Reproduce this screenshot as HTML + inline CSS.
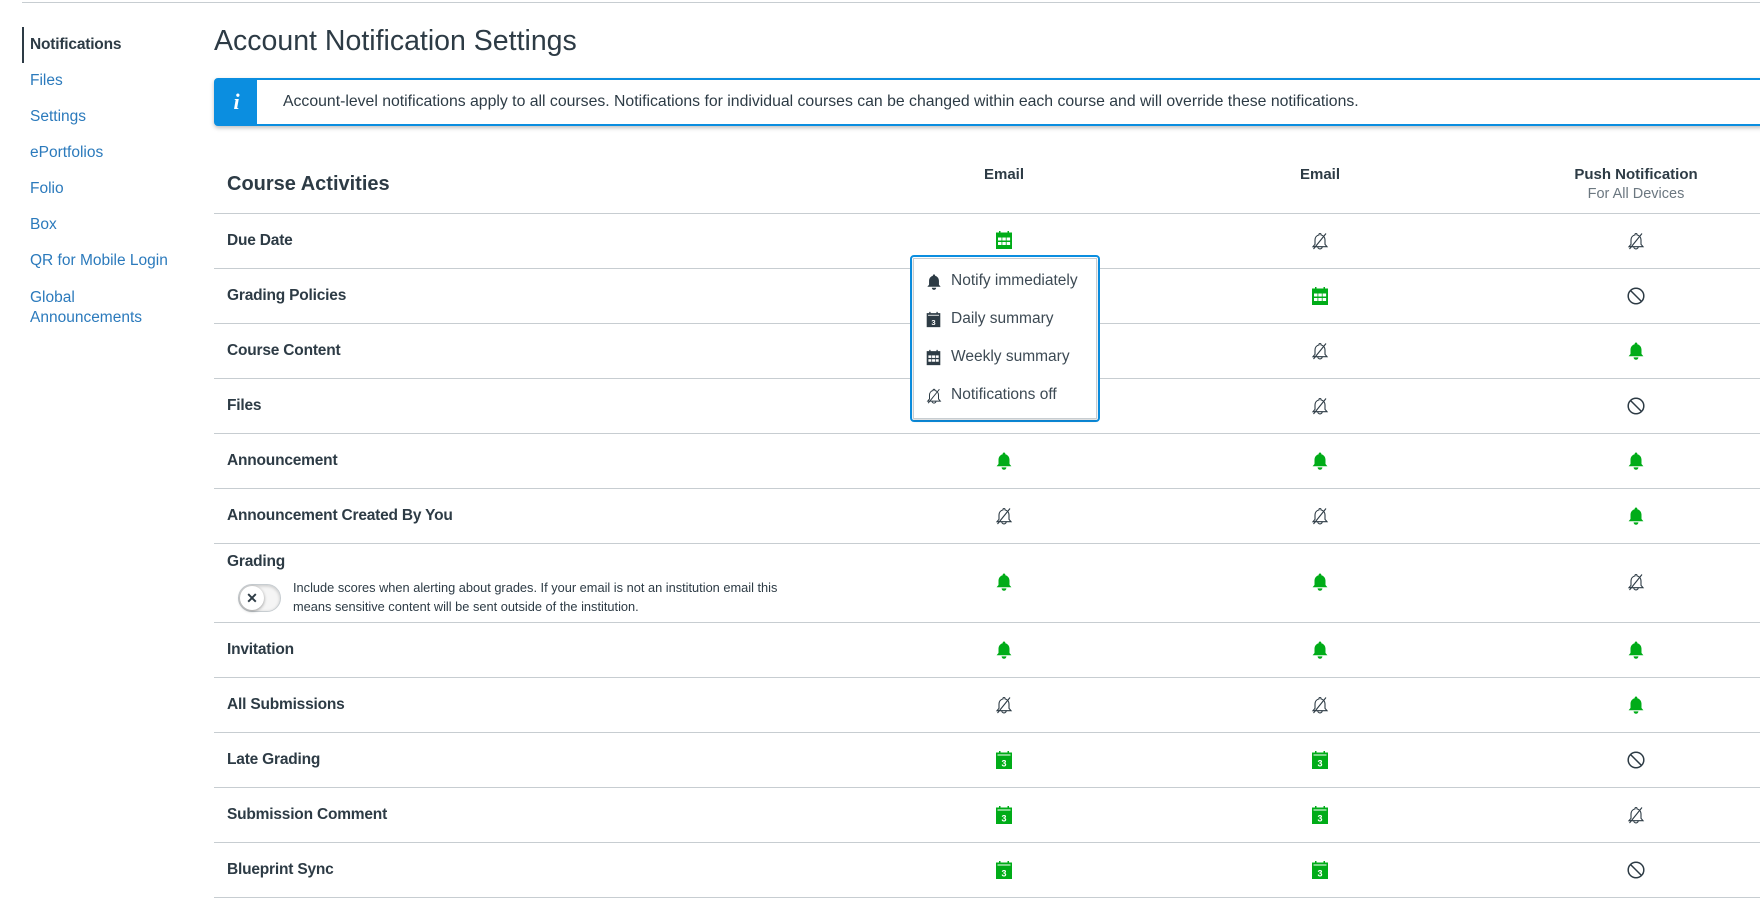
<!DOCTYPE html>
<html><head><meta charset="utf-8">
<style>
*{margin:0;padding:0;box-sizing:border-box}
body{width:1760px;height:899px;overflow:hidden;background:#fff;font-family:"Liberation Sans",sans-serif;color:#2d3b45;position:relative}
.a{position:absolute;white-space:nowrap}
.nav{left:30px;font-size:15.5px;color:#2b7abc}
.hl{position:absolute;left:214px;right:0;height:1px;background:#c7cdd1}
.lbl{left:227px;font-size:15.5px;font-weight:bold;letter-spacing:-0.2px}
</style></head><body>
<svg width="0" height="0" style="position:absolute">
<defs>
<symbol id="bell" viewBox="0 0 20 20"><path d="M10 1.5c.8 0 1.3.6 1.3 1.3v.4c2.6.6 4.2 2.9 4.2 5.6v4.2l1.9 2.3H2.6l1.9-2.3V8.8c0-2.7 1.6-5 4.2-5.6v-.4c0-.7.5-1.3 1.3-1.3zM7.6 16.4h4.8a2.4 2.4 0 0 1-4.8 0z" fill="currentColor"/></symbol>
<symbol id="off" viewBox="0 0 20 20"><g fill="none" stroke="#2d3b45" stroke-width="1.1"><path d="M10 2.5c.6 0 1 .4 1 1v.4c2.4.6 4 2.6 4 5v4.4l2 2.4H3l2-2.4V8.9c0-2.4 1.6-4.4 4-5v-.4c0-.6.4-1 1-1z"/><path d="M7.8 15.7a2.2 2.2 0 0 0 4.4 0"/><path d="M16 2.5 3.5 18"/></g></symbol>
<symbol id="no" viewBox="0 0 20 20"><g fill="none" stroke="#2d3b45" stroke-width="1.5"><circle cx="10" cy="10" r="7.8"/><path d="M4.5 4.5l11 11"/></g></symbol>
<symbol id="wk" viewBox="0 0 20 20"><path d="M5 1h1.5v2.5H5zM13.5 1H15v2.5h-1.5z" fill="currentColor"/><rect x="2" y="2.5" width="16" height="16.5" fill="currentColor"/><g fill="#fff"><rect x="4" y="7.5" width="3.5" height="3"/><rect x="8.3" y="7.5" width="3.5" height="3"/><rect x="12.6" y="7.5" width="3.5" height="3"/><rect x="4" y="12" width="3.5" height="3"/><rect x="8.3" y="12" width="3.5" height="3"/><rect x="12.6" y="12" width="3.5" height="3"/></g></symbol>
<symbol id="dy" viewBox="0 0 20 20"><path d="M5 1h1.5v2.5H5zM13.5 1H15v2.5h-1.5z" fill="currentColor"/><rect x="2" y="2.5" width="16" height="16.5" fill="currentColor"/><rect x="3.5" y="4.5" width="13" height="1" fill="#fff"/><text x="10" y="16.5" text-anchor="middle" font-family="Liberation Sans" font-weight="bold" font-size="9" fill="#fff">3</text></symbol>
</defs></svg>

<div class="a" style="left:22px;right:0;top:2px;height:1px;background:#c7cdd1"></div>
<div class="a" style="left:22px;top:27px;width:2px;height:36px;background:#2d3b45"></div>
<div class="a nav" style="top:36px;color:#2d3b45;font-weight:bold;letter-spacing:-0.2px">Notifications</div>
<div class="a nav" style="top:72px">Files</div>
<div class="a nav" style="top:108px">Settings</div>
<div class="a nav" style="top:144px">ePortfolios</div>
<div class="a nav" style="top:180px">Folio</div>
<div class="a nav" style="top:216px">Box</div>
<div class="a nav" style="top:252px">QR for Mobile Login</div>
<div class="a nav" style="top:288px;white-space:normal;width:130px;line-height:20px">Global Announcements</div>

<div class="a" style="left:214px;top:25px;font-size:28.5px;font-weight:normal">Account Notification Settings</div>

<div class="a" style="left:214px;top:78px;right:-4px;height:48px;border:2px solid #0b8ee0;border-radius:4px;box-shadow:0 2px 4px rgba(0,0,0,.25);background:#fff">
 <div style="position:absolute;left:0;top:0;bottom:0;width:41px;background:#0b8ee0;color:#fff;font-family:'Liberation Serif',serif;font-style:italic;font-weight:bold;font-size:22px;text-align:center;line-height:44px">i</div>
 <div style="position:absolute;left:67px;top:13px;font-size:15.8px">Account-level notifications apply to all courses. Notifications for individual courses can be changed within each course and will override these notifications.</div>
</div>

<div class="a" style="left:227px;top:173px;font-size:20px;font-weight:bold">Course Activities</div>
<div class="a" style="left:954px;width:100px;text-align:center;top:166px;font-size:15px;font-weight:bold">Email</div>
<div class="a" style="left:1270px;width:100px;text-align:center;top:166px;font-size:15px;font-weight:bold">Email</div>
<div class="a" style="left:1536px;width:200px;text-align:center;top:166px;font-size:15px;font-weight:bold">Push Notification</div>
<div class="a" style="left:1536px;width:200px;text-align:center;top:186px;font-size:14.5px;color:#6b7780">For All Devices</div>

<div class="hl" style="top:213px"></div><div class="hl" style="top:268px"></div><div class="hl" style="top:323px"></div><div class="hl" style="top:378px"></div><div class="hl" style="top:433px"></div><div class="hl" style="top:488px"></div><div class="hl" style="top:543px"></div><div class="hl" style="top:622px"></div><div class="hl" style="top:677px"></div><div class="hl" style="top:732px"></div><div class="hl" style="top:787px"></div><div class="hl" style="top:842px"></div><div class="hl" style="top:897px"></div>

<div class="a lbl" style="top:232px">Due Date</div>
<div class="a lbl" style="top:287px">Grading Policies</div>
<div class="a lbl" style="top:342px">Course Content</div>
<div class="a lbl" style="top:397px">Files</div>
<div class="a lbl" style="top:452px">Announcement</div>
<div class="a lbl" style="top:507px">Announcement Created By You</div>
<div class="a lbl" style="top:553px">Grading</div>
<div class="a lbl" style="top:641px">Invitation</div>
<div class="a lbl" style="top:696px">All Submissions</div>
<div class="a lbl" style="top:751px">Late Grading</div>
<div class="a lbl" style="top:806px">Submission Comment</div>
<div class="a lbl" style="top:861px">Blueprint Sync</div>

<div class="a" style="left:238px;top:584px;width:43px;height:28px;border-radius:14px;background:#f5f5f5;border:1px solid #c7cdd1;box-shadow:inset 0 1px 3px rgba(0,0,0,.2)">
 <div style="position:absolute;left:1px;top:1px;width:24px;height:24px;border-radius:50%;background:#fff;box-shadow:0 1px 3px rgba(0,0,0,.4);text-align:center;line-height:24px;font-size:14px;font-weight:bold">✕</div>
</div>
<div class="a" style="left:293px;top:578px;font-size:12.8px;line-height:19px;white-space:normal;width:505px">Include scores when alerting about grades. If your email is not an institution email this means sensitive content will be sent outside of the institution.</div>

<svg class="a" style="left:0;top:0" width="1760" height="899">
<g style="color:#00ac18">
<use href="#wk" x="994" y="230" width="20" height="20"/>
<use href="#bell" x="994" y="451" width="20" height="20"/>
<use href="#off" x="994" y="506" width="20" height="20"/>
<use href="#bell" x="994" y="572" width="20" height="20"/>
<use href="#bell" x="994" y="640" width="20" height="20"/>
<use href="#off" x="994" y="695" width="20" height="20"/>
<use href="#dy" x="994" y="750" width="20" height="20"/>
<use href="#dy" x="994" y="805" width="20" height="20"/>
<use href="#dy" x="994" y="860" width="20" height="20"/>
<use href="#off" x="1310" y="231" width="20" height="20"/>
<use href="#wk" x="1310" y="286" width="20" height="20"/>
<use href="#off" x="1310" y="341" width="20" height="20"/>
<use href="#off" x="1310" y="396" width="20" height="20"/>
<use href="#bell" x="1310" y="451" width="20" height="20"/>
<use href="#off" x="1310" y="506" width="20" height="20"/>
<use href="#bell" x="1310" y="572" width="20" height="20"/>
<use href="#bell" x="1310" y="640" width="20" height="20"/>
<use href="#off" x="1310" y="695" width="20" height="20"/>
<use href="#dy" x="1310" y="750" width="20" height="20"/>
<use href="#dy" x="1310" y="805" width="20" height="20"/>
<use href="#dy" x="1310" y="860" width="20" height="20"/>
<use href="#off" x="1626" y="231" width="20" height="20"/>
<use href="#no" x="1626" y="286" width="20" height="20"/>
<use href="#bell" x="1626" y="341" width="20" height="20"/>
<use href="#no" x="1626" y="396" width="20" height="20"/>
<use href="#bell" x="1626" y="451" width="20" height="20"/>
<use href="#bell" x="1626" y="506" width="20" height="20"/>
<use href="#off" x="1626" y="572" width="20" height="20"/>
<use href="#bell" x="1626" y="640" width="20" height="20"/>
<use href="#bell" x="1626" y="695" width="20" height="20"/>
<use href="#no" x="1626" y="750" width="20" height="20"/>
<use href="#off" x="1626" y="805" width="20" height="20"/>
<use href="#no" x="1626" y="860" width="20" height="20"/>
</g>
</svg>

<div class="a" style="left:910px;top:255px;width:190px;height:167px;border:2px solid #0b8ee0;border-radius:4px;background:#fff">
 <div style="position:absolute;left:1px;top:1px;right:1px;bottom:1px;border:1px solid #c7cdd1;box-shadow:0 2px 3px rgba(0,0,0,.15)"></div>
 <svg style="position:absolute;left:0;top:0" width="186" height="163"><g style="color:#2d3b45">
  <use href="#bell" x="13" y="16" width="18" height="18"/>
  <use href="#dy" x="13" y="54" width="17" height="17"/>
  <use href="#wk" x="13" y="92" width="17" height="17"/>
  <use href="#off" x="13" y="130" width="18" height="18"/>
 </g></svg>
 <div class="a" style="left:39px;top:15px;font-size:15.5px;color:#3d4a54">Notify immediately</div>
 <div class="a" style="left:39px;top:53px;font-size:15.5px;color:#3d4a54">Daily summary</div>
 <div class="a" style="left:39px;top:91px;font-size:15.5px;color:#3d4a54">Weekly summary</div>
 <div class="a" style="left:39px;top:129px;font-size:15.5px;color:#3d4a54">Notifications off</div>
</div>
</body></html>
